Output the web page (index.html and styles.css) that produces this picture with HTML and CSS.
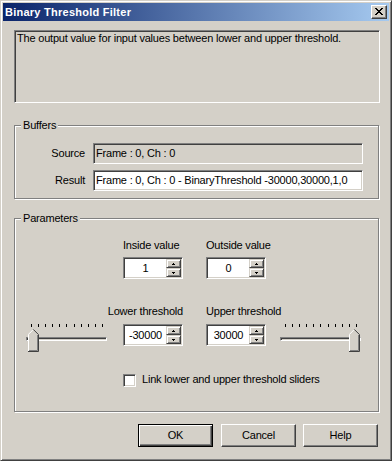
FILE: index.html
```html
<!DOCTYPE html>
<html lang="en">
<head>
<meta charset="utf-8">
<title>Binary Threshold Filter</title>
<link rel="stylesheet" href="styles.css">
</head>
<body>
<div class="window">
  <div class="titlebar">
    <span class="title">Binary Threshold Filter</span>
    <span class="close" role="button" aria-label="Close">
      <svg width="8" height="7" viewBox="0 0 8 7"><path d="M0 0h2v1H0zM6 0h2v1H6zM1 1h2v1H1zM5 1h2v1H5zM2 2h4v1H2zM3 3h2v1H3zM2 4h4v1H2zM1 5h2v1H1zM5 5h2v1H5zM0 6h2v1H0zM6 6h2v1H6z" fill="#000"/></svg>
    </span>
  </div>
  <div class="client">
    <div class="desc">The output value for input values between lower and upper threshold.</div>

    <div class="group buffers">
      <div class="group-title">Buffers</div>
      <div class="buf-grid">
        <span class="buf-label">Source</span>
        <div class="field readonly">Frame : 0, Ch : 0</div>
        <span class="buf-label">Result</span>
        <div class="field">Frame : 0, Ch : 0 - BinaryThreshold -30000,30000,1,0</div>
      </div>
    </div>

    <div class="group params">
      <div class="group-title">Parameters</div>
      <div class="param-grid">
        <span class="plabel lbl-inside">Inside value</span>
        <span class="plabel lbl-outside">Outside value</span>

        <div class="spin spin-in">
          <span class="spin-val">1</span>
          <span class="spin-btns">
            <span class="sb"><svg width="3" height="2" viewBox="0 0 3 2"><path d="M1 0h1v1H1zM0 1h3v1H0z" fill="#000"/></svg></span>
            <span class="sb"><svg width="3" height="2" viewBox="0 0 3 2"><path d="M0 0h3v1H0zM1 1h1v1H1z" fill="#000"/></svg></span>
          </span>
        </div>
        <div class="spin spin-out">
          <span class="spin-val">0</span>
          <span class="spin-btns">
            <span class="sb"><svg width="3" height="2" viewBox="0 0 3 2"><path d="M1 0h1v1H1zM0 1h3v1H0z" fill="#000"/></svg></span>
            <span class="sb"><svg width="3" height="2" viewBox="0 0 3 2"><path d="M0 0h3v1H0zM1 1h1v1H1z" fill="#000"/></svg></span>
          </span>
        </div>

        <span class="plabel lbl-lower">Lower threshold</span>
        <span class="plabel lbl-upper">Upper threshold</span>

        <div class="slider slider-left">
          <div class="ticks"><i></i><i></i><i></i><i></i><i></i><i></i><i></i><i></i><i></i><i></i><i></i></div>
          <div class="track"></div>
          <svg class="thumb" width="11" height="23" viewBox="0 0 11 23">
            <path d="M0 5L5 0L10 5V22H0Z" fill="#d4d0c8"/>
            <path d="M0.5 22V5.3L5.2 0.6" stroke="#fff" fill="none"/>
            <path d="M5.3 0.4L10.5 5.6V22.5H0" stroke="#404040" fill="none"/>
            <path d="M9.5 6V21.5H1" stroke="#808080" fill="none"/>
          </svg>
        </div>
        <div class="spin spin-lo">
          <span class="spin-val">-30000</span>
          <span class="spin-btns">
            <span class="sb"><svg width="3" height="2" viewBox="0 0 3 2"><path d="M1 0h1v1H1zM0 1h3v1H0z" fill="#000"/></svg></span>
            <span class="sb"><svg width="3" height="2" viewBox="0 0 3 2"><path d="M0 0h3v1H0zM1 1h1v1H1z" fill="#000"/></svg></span>
          </span>
        </div>
        <div class="spin spin-hi">
          <span class="spin-val">30000</span>
          <span class="spin-btns">
            <span class="sb"><svg width="3" height="2" viewBox="0 0 3 2"><path d="M1 0h1v1H1zM0 1h3v1H0z" fill="#000"/></svg></span>
            <span class="sb"><svg width="3" height="2" viewBox="0 0 3 2"><path d="M0 0h3v1H0zM1 1h1v1H1z" fill="#000"/></svg></span>
          </span>
        </div>
        <div class="slider slider-right">
          <div class="ticks"><i></i><i></i><i></i><i></i><i></i><i></i><i></i><i></i><i></i><i></i><i></i></div>
          <div class="track"></div>
          <svg class="thumb" width="11" height="23" viewBox="0 0 11 23">
            <path d="M0 5L5 0L10 5V22H0Z" fill="#d4d0c8"/>
            <path d="M0.5 22V5.3L5.2 0.6" stroke="#fff" fill="none"/>
            <path d="M5.3 0.4L10.5 5.6V22.5H0" stroke="#404040" fill="none"/>
            <path d="M9.5 6V21.5H1" stroke="#808080" fill="none"/>
          </svg>
        </div>

        <label class="check-row">
          <span class="checkbox"></span>
          <span class="check-text">Link lower and upper threshold sliders</span>
        </label>
      </div>
    </div>

    <div class="buttons">
      <span class="btn default">OK</span>
      <span class="btn cancel">Cancel</span>
      <span class="btn help">Help</span>
    </div>
  </div>
</div>
</body>
</html>
```

FILE: styles.css
```css
* {
  box-sizing: border-box;
}

html,
body {
  margin: 0;
  padding: 0;
  background: #d4d0c8;
}

body {
  font-family: "Liberation Sans", Arial, sans-serif;
  font-size: 11px;
  line-height: 13px;
  letter-spacing: -0.2px;
  color: #000;
}

.window {
  width: 392px;
  height: 461px;
  background: #d4d0c8;
  border: 1px solid;
  border-color: #d4d0c8 #404040 #404040 #d4d0c8;
  box-shadow: inset 1px 1px #fff, inset -1px -1px #808080;
  padding: 2px;
  display: flex;
  flex-direction: column;
}

.titlebar {
  flex: none;
  height: 18px;
  display: flex;
  align-items: center;
  justify-content: space-between;
  padding: 0 2px 0 2px;
  background: linear-gradient(to right, #0a246a, #a6caf0);
}

.title {
  color: #fff;
  font-weight: bold;
  letter-spacing: 0.25px;
}

.close {
  width: 16px;
  height: 14px;
  display: flex;
  align-items: center;
  justify-content: center;
  background: #d4d0c8;
  border: 1px solid;
  border-color: #fff #404040 #404040 #fff;
  box-shadow: inset -1px -1px #808080;
  padding: 0 1px 1px 0;
}

.close svg {
  display: block;
}

.client {
  flex: 1;
  padding: 9px 9px 0 11px;
}

.desc {
  height: 73px;
  border: 1px solid;
  border-color: #808080 #fff #fff #808080;
  box-shadow: inset 1px 1px #404040, inset -1px -1px #d4d0c8;
  padding: 1px 2px;
}

.group {
  border: 1px solid #808080;
  box-shadow: inset 1px 1px #fff, 1px 1px #fff;
  margin-right: 1px;
}

.group-title {
  width: fit-content;
  margin: -7px 0 0 6px;
  padding: 0 2px;
  background: #d4d0c8;
}

.buffers {
  margin-top: 22px;
  padding-bottom: 7px;
}

.buf-grid {
  display: grid;
  grid-template-columns: 70px 270px;
  column-gap: 8px;
  row-gap: 6px;
  margin-top: 11px;
}

.buf-label {
  text-align: right;
  line-height: 21px;
}

.field {
  height: 21px;
  border: 1px solid;
  border-color: #808080 #fff #fff #808080;
  box-shadow: inset 1px 1px #404040, inset -1px -1px #d4d0c8;
  padding: 0 2px;
  line-height: 19px;
  background: #fff;
  white-space: nowrap;
  overflow: hidden;
}

.field.readonly {
  background: #d4d0c8;
}

.params {
  margin-top: 19px;
  padding-bottom: 24px;
}

.param-grid {
  display: grid;
  grid-template-columns: 108px 60px 23px 60px 1fr;
  margin-top: 14px;
}

.plabel {
  white-space: nowrap;
}

.lbl-inside {
  grid-column: 2;
  grid-row: 1;
}

.lbl-outside {
  grid-column: 4;
  grid-row: 1;
}

.spin-in {
  grid-column: 2;
  grid-row: 2;
  margin-top: 5px;
}

.spin-out {
  grid-column: 4;
  grid-row: 2;
  margin-top: 5px;
}

.lbl-lower {
  grid-column: 1 / 3;
  grid-row: 3;
  justify-self: end;
  margin-top: 26px;
}

.lbl-upper {
  grid-column: 4 / 6;
  grid-row: 3;
  justify-self: start;
  margin-top: 26px;
}

.slider-left {
  grid-column: 1;
  grid-row: 4;
  margin-top: 6px;
  margin-left: 11px;
}

.spin-lo {
  grid-column: 2;
  grid-row: 4;
  margin-top: 6px;
}

.spin-hi {
  grid-column: 4;
  grid-row: 4;
  margin-top: 6px;
}

.slider-right {
  grid-column: 5;
  grid-row: 4;
  margin-top: 6px;
  margin-left: 14px;
}

.spin {
  width: 60px;
  height: 22px;
  display: flex;
  border: 1px solid;
  border-color: #808080 #fff #fff #808080;
  box-shadow: inset 1px 1px #404040, inset -1px -1px #d4d0c8;
  padding: 1px;
  background: #fff;
}

.spin-val {
  flex: 1;
  text-align: center;
  line-height: 18px;
}

.spin-btns {
  width: 15px;
  display: flex;
  flex-direction: column;
}

.sb {
  height: 9px;
  display: flex;
  align-items: center;
  justify-content: center;
  background: #d4d0c8;
  border: 1px solid;
  border-color: #d4d0c8 #404040 #404040 #d4d0c8;
  box-shadow: inset 1px 1px #fff, inset -1px -1px #808080;
}

.sb svg {
  display: block;
}

.slider {
  width: 81px;
  height: 22px;
  position: relative;
}

.ticks {
  display: flex;
  justify-content: space-between;
  margin: 0 4px 0 5px;
  height: 3px;
}

.ticks i {
  display: block;
  width: 1px;
  height: 3px;
  background: #000;
}

.track {
  margin-top: 10px;
  height: 4px;
  border: 1px solid;
  border-color: #808080 #fff #fff #808080;
  box-shadow: inset 1px 1px #404040, inset -1px -1px #d4d0c8;
}

.thumb {
  position: absolute;
  top: 5px;
  display: block;
}

.slider-left .thumb {
  left: 2px;
}

.slider-right .thumb {
  left: 69px;
}

.check-row {
  grid-column: 2 / 6;
  grid-row: 5;
  margin-top: 27px;
  display: flex;
  align-items: flex-start;
  gap: 6px;
}

.checkbox {
  flex: none;
  width: 13px;
  height: 13px;
  margin-top: 1px;
  background: #fff;
  border: 1px solid;
  border-color: #808080 #fff #fff #808080;
  box-shadow: inset 1px 1px #404040, inset -1px -1px #d4d0c8;
}

.check-text {
  white-space: nowrap;
}

.buttons {
  display: flex;
  justify-content: flex-end;
  margin-top: 12px;
  padding-right: 2px;
}

.btn {
  width: 75px;
  height: 23px;
  display: flex;
  align-items: center;
  justify-content: center;
  padding-bottom: 1px;
  background: #d4d0c8;
  border: 1px solid;
  border-color: #fff #404040 #404040 #fff;
  box-shadow: inset -1px -1px #808080;
}

.btn.default {
  border-color: #000;
  box-shadow: inset 1px 1px #fff, inset -1px -1px #404040, inset -2px -2px #808080;
}

.btn.cancel {
  margin-left: 8px;
}

.btn.help {
  margin-left: 7px;
}
```
